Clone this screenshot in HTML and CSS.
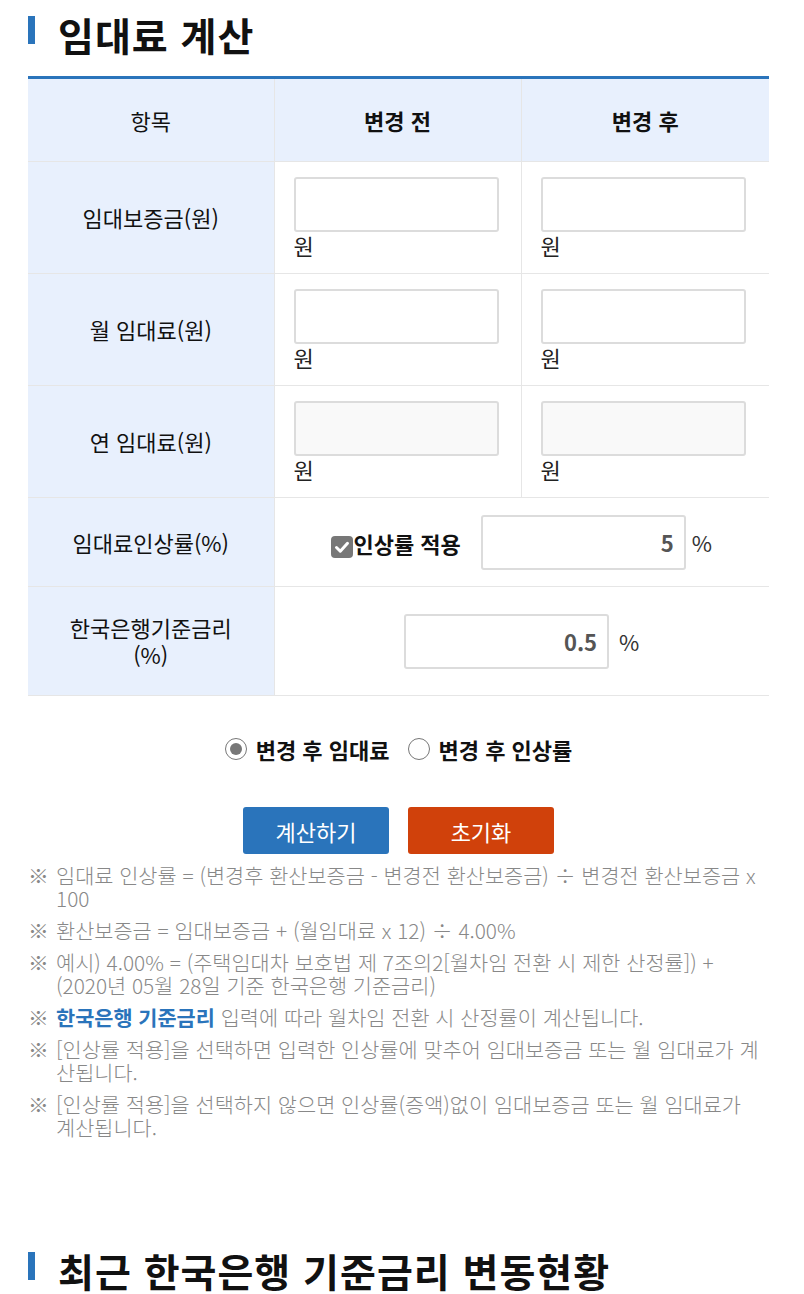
FILE: index.html
```html
<!DOCTYPE html>
<html lang="ko">
<head>
  <meta charset="UTF-8" />
  <meta name="viewport" content="width=device-width, initial-scale=1.0" />
  <title>임대료 계산</title>
  <link rel="stylesheet" href="styles.css">
</head>
<body>
  <h2 class="sec-title">임대료 계산</h2>

  <table class="calc">
    <colgroup>
      <col class="c1"><col class="c2"><col class="c3">
    </colgroup>
    <tr class="head">
      <th>항목</th>
      <th>변경 전</th>
      <th>변경 후</th>
    </tr>
    <tr class="money">
      <th>임대보증금(원)</th>
      <td><input type="text" /><span class="unit">원</span></td>
      <td><input type="text" /><span class="unit">원</span></td>
    </tr>
    <tr class="money">
      <th>월 임대료(원)</th>
      <td><input type="text" /><span class="unit">원</span></td>
      <td><input type="text" /><span class="unit">원</span></td>
    </tr>
    <tr class="money">
      <th>연 임대료(원)</th>
      <td><input type="text" class="ro" readonly /><span class="unit">원</span></td>
      <td><input type="text" class="ro" readonly /><span class="unit">원</span></td>
    </tr>
    <tr class="rate">
      <th>임대료인상률(%)</th>
      <td colspan="2">
        <div class="rate-line">
          <label class="chk"><span class="box"><svg viewBox="0 0 20 20" width="20" height="20"><path d="M4.5 10.5 L8.3 14.2 L15.5 6.3" fill="none" stroke="#fff" stroke-width="3" stroke-linecap="round" stroke-linejoin="round"/></svg></span>인상률 적용</label>
          <input type="text" class="num" value="5" />
          <span class="pct">%</span>
        </div>
      </td>
    </tr>
    <tr class="base">
      <th>한국은행기준금리<br>(%)</th>
      <td colspan="2">
        <div class="rate-line">
          <input type="text" class="num" value="0.5" />
          <span class="pct">%</span>
        </div>
      </td>
    </tr>
  </table>

  <div class="modes">
    <label class="radio"><span class="dot on"></span>변경 후 임대료</label>
    <label class="radio"><span class="dot"></span>변경 후 인상률</label>
  </div>

  <div class="actions">
    <button class="btn blue">계산하기</button>
    <button class="btn red">초기화</button>
  </div>

  <ul class="notes">
    <li>임대료 인상률 = (변경후 환산보증금 - 변경전 환산보증금) ÷ 변경전 환산보증금 x 100</li>
    <li>환산보증금 = 임대보증금 + (월임대료 x 12) ÷ 4.00%</li>
    <li>예시) 4.00% = (주택임대차 보호법 제 7조의2[월차임 전환 시 제한 산정률]) + (2020년 05월 28일 기준 한국은행 기준금리)</li>
    <li><b>한국은행 기준금리</b> 입력에 따라 월차임 전환 시 산정률이 계산됩니다.</li>
    <li>[인상률 적용]을 선택하면 입력한 인상률에 맞추어 임대보증금 또는 월 임대료가 계산됩니다.</li>
    <li>[인상률 적용]을 선택하지 않으면 인상률(증액)없이 임대보증금 또는 월 임대료가<br>계산됩니다.</li>
  </ul>

  <h2 class="sec-title second">최근 한국은행 기준금리 변동현황</h2>
</body>
</html>
```

FILE: styles.css
```css
body { margin: 0; padding: 0 0 0 28px; font-family: "Noto Sans CJK KR", "Noto Sans", sans-serif; color: #111; background: #fff; }

.sec-title { position: relative; margin: 0; padding: 8px 0 0 30px; height: 60px; font-size: 39px; font-weight: bold; line-height: 52px; letter-spacing: 1px; }
.sec-title::before { content: ""; position: absolute; left: 0; top: 16px; width: 7px; height: 28px; background: #2a74bb; }
.sec-title.second { margin-top: 97px; }

.calc { width: 741px; border-collapse: collapse; border-top: 3px solid #2a74bb; margin-top: 8px; table-layout: fixed; }
.calc .c1 { width: 246px; }
.calc .c2 { width: 247px; }
.calc .c3 { width: 248px; }
.calc th, .calc td { border: 1px solid #e6e6e6; font-size: 22px; }
.calc tr > :first-child { border-left: none; }
.calc tr > :last-child { border-right: none; }
.calc th { background: #e8f0fd; font-weight: normal; text-align: center; line-height: 27px; }
.calc .head th { height: 80px; font-weight: bold; }
.calc .head th:first-child { font-weight: normal; }
.calc td { vertical-align: top; padding: 15px 19px 0; }
.calc .money th, .calc .money td { height: 96px; }
.calc input { display: block; width: 205px; height: 55px; box-sizing: border-box; border: 2px solid #dcdcdc; border-radius: 3px; background: #fff; font: inherit; padding: 0 10px; outline: none; }
.calc input.ro { background: #f9f9f9; }
.unit { display: block; line-height: 26px; color: #222; }

.calc .rate td, .calc .base td { vertical-align: middle; padding: 0; }
.calc .rate th, .calc .rate td { height: 86px; }
.calc .base th, .calc .base td { height: 106px; }
.rate-line { display: flex; align-items: center; justify-content: center; }
.chk { display: flex; align-items: center; font-weight: bold; margin-right: 20px; margin-top: 2px; }
.box { width: 22px; height: 22px; border-radius: 4px; background: #777; display: flex; align-items: center; justify-content: center; margin-top: 8px; }
.calc input.num { text-align: right; font-weight: bold; color: #555; }
.pct { margin-left: 6px; color: #333; }
.base .pct { margin-left: 10px; }

.modes { display: flex; justify-content: center; gap: 18px; margin: 37px 0 0; width: 741px; font-size: 22px; font-weight: bold; }
.radio { display: flex; align-items: center; gap: 9px; }
.dot { width: 22px; height: 22px; border-radius: 50%; border: 1px solid #777; box-sizing: border-box; background: #fff; position: relative; }
.dot.on::after { content: ""; position: absolute; left: 4px; top: 4px; width: 12px; height: 12px; border-radius: 50%; background: #777; }

.actions { display: flex; justify-content: center; gap: 19px; width: 741px; margin-top: 42px; }
.btn { width: 146px; height: 47px; border: none; border-radius: 3px; color: #fff; font: inherit; font-size: 22px; }
.blue { background: #2a74bb; }
.red { background: #d0410b; }

.notes { list-style: none; margin: 10px 0 0; padding: 0; width: 742px; color: #888; font-size: 20.8px; font-weight: 300; line-height: 23px; }
.notes li { position: relative; padding-left: 28px; margin-bottom: 9px; }
.notes li::before { content: "※"; position: absolute; left: 0; }
.notes b { color: #2a74bb; font-weight: bold; }
```
